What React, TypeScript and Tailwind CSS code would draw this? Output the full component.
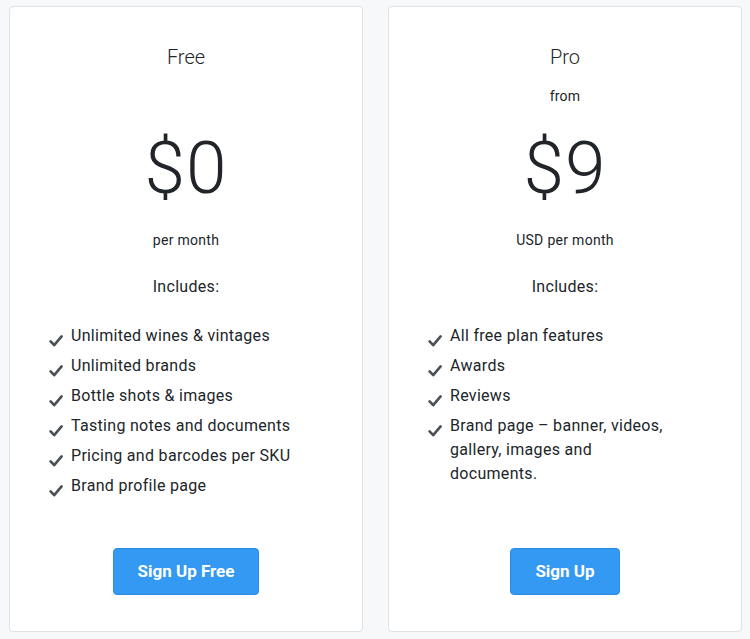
import React from "react";

type Plan = {
  name: string;
  from: boolean;
  price: string;
  unit: string;
  features: string[];
  cta: string;
};

const plans: Plan[] = [
  {
    name: "Free",
    from: false,
    price: "$0",
    unit: "per month",
    features: [
      "Unlimited wines & vintages",
      "Unlimited brands",
      "Bottle shots & images",
      "Tasting notes and documents",
      "Pricing and barcodes per SKU",
      "Brand profile page",
    ],
    cta: "Sign Up Free",
  },
  {
    name: "Pro",
    from: true,
    price: "$9",
    unit: "USD per month",
    features: [
      "All free plan features",
      "Awards",
      "Reviews",
      "Brand page – banner, videos, gallery, images and documents.",
    ],
    cta: "Sign Up",
  },
];

const Check = () => (
  <svg viewBox="0 0 14 12" className="w-[14px] h-[12px] shrink-0 mt-[11px]">
    <path
      d="M1.6 6.4 L5.2 10.2 L12.6 1.4"
      fill="none"
      stroke="#495057"
      strokeWidth="2.6"
      strokeLinecap="round"
      strokeLinejoin="round"
    />
  </svg>
);

const PlanCard: React.FC<{ plan: Plan }> = ({ plan }) => {
  return (
    <div className="flex flex-col items-center bg-white border border-[#dfe3e7] rounded-[4px] pt-[36px] pb-[36px] text-[#212529]">
      <p className="text-[20px] leading-[28px] font-light">{plan.name}</p>
      {/* "from" keeps both prices on one line */}
      <p className={`mt-[15px] text-[14px] leading-[20px] tracking-[0.2px] ${plan.from ? "" : "invisible"}`}>from</p>
      <p className="mt-[26px] text-[73px] leading-[72px] font-light tracking-[1px]">{plan.price}</p>
      <p className="mt-[26px] text-[14px] leading-[20px] tracking-[0.3px]">{plan.unit}</p>
      <p className="mt-[25px] text-[16px] leading-[24px] tracking-[0.3px]">Includes:</p>
      <ul className="flex flex-col gap-[6px] mt-[25px] self-stretch pl-[39px] flex-1">
        {plan.features.map((f) => (
          <li key={f} className="flex items-start gap-[8px] text-[16px] leading-[24px] tracking-[0.3px]">
            <Check />
            <span className="max-w-[220px]">{f}</span>
          </li>
        ))}
      </ul>
      <button className="mt-[50px] h-[47px] px-[24px] rounded-[4px] bg-[#3399f3] border border-[#2a8be6] text-white text-[17px] font-bold">
        {plan.cta}
      </button>
    </div>
  );
};

export default function App() {
  return (
    <div
      className="min-h-screen bg-[#f7f8fa] pt-[6px] pl-[9px] pr-[8px]"
      style={{ fontFamily: "Roboto, 'Liberation Sans', sans-serif" }}
    >
      <div className="grid grid-cols-2 gap-[25px]">
        {plans.map((p) => (
          <PlanCard key={p.name} plan={p} />
        ))}
      </div>
    </div>
  );
}
